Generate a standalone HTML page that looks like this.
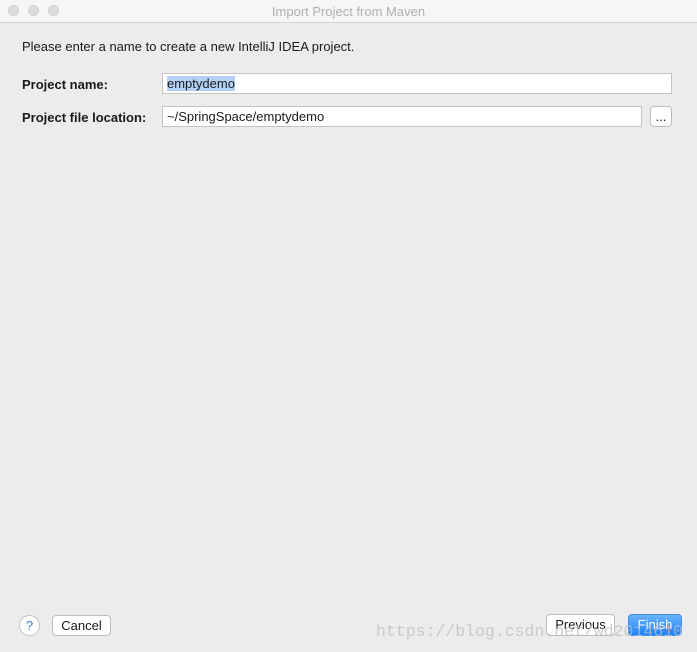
<!DOCTYPE html>
<html><head><style>
body{margin:0;width:697px;height:652px;background:#ececec;font-family:"Liberation Sans",sans-serif;font-size:13px;color:#1a1a1a;position:relative;overflow:hidden}
.t{position:absolute;left:0;top:0;width:697px;height:22px;background:#f6f6f6;border-bottom:1px solid #d4d4d4}
.t span{position:absolute;left:0;right:0;top:4px;text-align:center;color:#b0b0b0;font-size:13px}
.d{position:absolute;top:5px;width:11px;height:11px;border-radius:50%;background:#dcdcdc;border:1px solid #d0d0d0;box-sizing:border-box}
.a{position:absolute}
.in{position:absolute;background:#fff;border:1px solid #c4c4c4;box-sizing:border-box;height:21px;padding:2px 4px;font-size:13px}
.b{position:absolute;background:#fff;border:1px solid #bcbcbc;border-radius:4px;box-sizing:border-box;text-align:center;font-size:13px}
</style></head><body>
<div class="t"><div class="d" style="left:8px"></div><div class="d" style="left:28px"></div><div class="d" style="left:48px"></div><span>Import Project from Maven</span></div>
<div class="a" style="left:22px;top:39px">Please enter a name to create a new IntelliJ IDEA project.</div>
<div class="a" style="left:22px;top:77px;font-weight:bold">Project name:</div>
<div class="in" style="left:162px;top:73px;width:510px"><span style="background:#b3d1f5">emptydemo</span></div>
<div class="a" style="left:22px;top:110px;font-weight:bold">Project file location:</div>
<div class="in" style="left:162px;top:106px;width:480px">~/SpringSpace/emptydemo</div>
<div class="b" style="left:650px;top:106px;width:22px;height:21px;line-height:20px">...</div>
<div class="a" style="left:19px;top:615px;width:21px;height:21px;border-radius:50%;background:#fff;border:1px solid #c4c4c4;box-sizing:border-box;text-align:center;line-height:19px;color:#3a82d6">?</div>
<div class="b" style="left:52px;top:615px;width:59px;height:21px;line-height:19px">Cancel</div>
<div class="b" style="left:546px;top:614px;width:69px;height:22px;line-height:20px">Previous</div>
<div class="b" style="left:628px;top:614px;width:54px;height:22px;line-height:20px;background:linear-gradient(#6cb3fa,#1a82fb);border-color:#3d8ef0;color:#fff">Finish</div>
<div class="a" style="left:376px;top:622px;font-family:'Liberation Mono',monospace;font-size:16.5px;color:rgba(190,190,190,0.75);z-index:5">https://blog.csdn.net/wd2014610</div>
</body></html>
